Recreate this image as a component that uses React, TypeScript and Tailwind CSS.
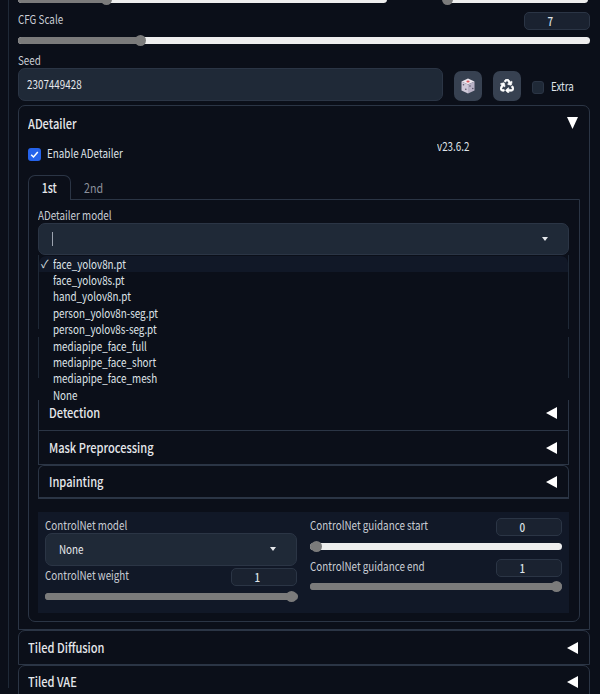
import React from 'react';
import { FaRecycle } from 'react-icons/fa';

const models = [
  'face_yolov8n.pt',
  'face_yolov8s.pt',
  'hand_yolov8n.pt',
  'person_yolov8n-seg.pt',
  'person_yolov8s-seg.pt',
  'mediapipe_face_full',
  'mediapipe_face_short',
  'mediapipe_face_mesh',
  'None',
];

// the text in the picture is narrower than any installed face, so squeeze it a bit
function T({ children, className = '', center = false }: { children: React.ReactNode; className?: string; center?: boolean }) {
  return (
    <span className={`inline-block whitespace-nowrap scale-x-[0.82] ${center ? 'origin-center' : 'origin-left'} ${className}`}>
      {children}
    </span>
  );
}

function Slider({ value, className = '', thumbOnly = false }: { value: number; className?: string; thumbOnly?: boolean }) {
  return (
    <div className={`relative h-[11px] flex items-center ${className}`}>
      <div className={`w-full h-[7px] rounded-full overflow-hidden ${thumbOnly ? 'bg-[#7b7b7b]' : 'bg-[#eeeeee]'}`}>
        <div className="h-full bg-[#7b7b7b]" style={{ width: `${value}%` }} />
      </div>
      <div className="absolute top-0 w-[11px] h-[11px] rounded-full bg-[#7b7b7b]" style={{ left: `calc(${value}% - 5.5px)` }} />
    </div>
  );
}

function NumberBox({ value }: { value: string }) {
  return (
    <div className="w-[66px] h-[18px] rounded-[5px] border border-[#2b3545] bg-[#1a2230] flex items-center justify-center pr-[13px] text-[12px] font-medium text-[#dfe3e8]">
      <T center>{value}</T>
    </div>
  );
}

function Triangle({ down = false, small = false }: { down?: boolean; small?: boolean }) {
  if (small) {
    return (
      <svg width="6" height="4" viewBox="0 0 6 4" className="block">
        <polygon points="0,0 6,0 3,4" fill="#e5e7eb" />
      </svg>
    );
  }
  return (
    <svg width="11" height="12" viewBox="0 0 11 12" className="block">
      <polygon points={down ? '0,0 11,0 5.5,12' : '11,0 11,12 0,6'} fill="#ffffff" />
    </svg>
  );
}

function Dice() {
  return (
    <svg width="14" height="16" viewBox="0 0 14 16" className="block">
      <polygon points="7,0.5 13.5,3.5 7,6.5 0.5,3.5" fill="#ece6ee" />
      <polygon points="0.5,3.5 7,6.5 7,15.5 0.5,12.5" fill="#cfc8d8" />
      <polygon points="13.5,3.5 7,6.5 7,15.5 13.5,12.5" fill="#b9b2c6" />
      <ellipse cx="7" cy="3.5" rx="1.6" ry="0.9" fill="#d9565b" />
      <circle cx="2.5" cy="6.8" r="0.8" fill="#5a5468" />
      <circle cx="4.8" cy="11.2" r="0.8" fill="#5a5468" />
      <circle cx="9" cy="8" r="0.8" fill="#5a5468" />
      <circle cx="11.8" cy="10.5" r="0.8" fill="#5a5468" />
    </svg>
  );
}

function SubAccordion({ title, className = '' }: { title: string; className?: string }) {
  return (
    <div className={`flex items-center justify-between pl-[10px] pr-[11px] border-[#2b3545] ${className}`}>
      <T className="text-[13.5px] font-medium text-[#e5e7eb]">{title}</T>
      <Triangle />
    </div>
  );
}

export default function App() {
  return (
    <div className="w-[600px] h-[694px] overflow-hidden bg-[#0b0f19] text-[#e5e7eb] font-['Noto_Sans_CJK_SC','Noto_Sans',sans-serif]">
      <div className="ml-2 h-full border-l border-[#1f2937] pl-[9px]">
        <div className="w-[572px]">
          <div className="-mt-[6px] flex justify-between">
            <Slider value={24} className="w-[369px]" />
            <Slider value={3} className="w-[145px] mr-[2px]" />
          </div>

          <div className="mt-[7px] flex justify-between items-start">
            <T className="text-[12px] leading-[16px] mt-[-1px] text-[#c9cdd4]">CFG Scale</T>
            <NumberBox value="7" />
          </div>
          <Slider value={21.5} className="mt-[5px]" />

          <div className="mt-[6px] h-[16px] text-[12px] leading-[16px] text-[#c9cdd4]">
            <T>Seed</T>
          </div>
          <div className="flex h-[33px]">
            <div className="w-[425px] pb-[2px] rounded-[7px] border border-[#2b3545] bg-[#1f2937] flex items-center pl-[8px] text-[12px] text-[#e5e7eb]">
              <T>2307449428</T>
            </div>
            <button className="ml-[11px] mt-[3px] w-[28px] h-[30px] rounded-[7px] bg-[#374151] flex items-center justify-center">
              <Dice />
            </button>
            <button className="ml-[11px] mt-[3px] w-[28px] h-[30px] rounded-[7px] bg-[#374151] flex items-center justify-center text-white">
              <FaRecycle size={14} stroke="currentColor" strokeWidth={24} />
            </button>
            <div className="ml-[11px] mt-[13px] w-[12px] h-[13px] rounded-[3px] border border-[#2b3545] bg-[#1f2937]" />
            <T className="ml-[7px] mt-[10px] text-[12px] leading-[16px] text-[#dfe3e8]">Extra</T>
          </div>

          {/* ADetailer */}
          <div className="mt-[4px] h-[525px] rounded-t-[7px] border border-[#2b3545] pl-[9px]">
            <div className="h-[34px] flex items-center justify-between pr-[11px]">
              <T className="text-[13.5px] font-medium">ADetailer</T>
              <Triangle down />
            </div>
            <div className="mt-[8px] h-[13px] flex items-center">
              <div className="w-[13px] h-[13px] rounded-[3px] bg-[#2563eb] flex items-center justify-center">
                <svg width="9" height="9" viewBox="0 0 9 9" className="block">
                  <path d="M1.2 4.8 L3.5 7 L7.8 2" fill="none" stroke="#ffffff" strokeWidth="1.5" />
                </svg>
              </div>
              <div className="ml-[6px] w-[390px] mb-[4px] text-[12px] text-[#dfe3e8]">
                <T>Enable ADetailer</T>
              </div>
              <T className="mb-[18px] text-[12px] text-[#dfe3e8]">v23.6.2</T>
            </div>

            <div className="mt-[14px] flex h-[25px] relative z-10">
              <div className="w-[43px] h-[25px] rounded-t-[7px] border border-b-0 border-[#2b3545] bg-[#0b0f19] flex items-center justify-center text-[13px] font-medium">
                <T center>1st</T>
              </div>
              <div className="ml-[13px] w-[20px] flex items-center justify-center text-[13px] text-[#8b919b]">
                <T center>2nd</T>
              </div>
            </div>

            <div className="-mt-px w-[552px] h-[423px] rounded-b-[7px] border border-[#2b3545] pl-[9px] pr-[10px] pt-[7px]">
              <div className="h-[16px] text-[12px] leading-[16px] text-[#c9cdd4]">
                <T>ADetailer model</T>
              </div>
              <div className="relative">
                <div className="h-[32px] rounded-[7px] border border-[#2b3545] bg-[#1f2937] flex items-center justify-between pl-[13px] pr-[20px]">
                  <div className="w-px h-[14px] bg-[#9ca3af]" />
                  <Triangle small />
                </div>

                <div className="h-[74px] border-x border-[#1f2937]" />
                <div className="mt-[8px] h-[41px] border-x border-[#1f2937]" />
                <SubAccordion title="Detection" className="mt-[22px] h-[31px] pb-[5px] border-x border-b" />
                <SubAccordion title="Mask Preprocessing" className="h-[34px] border-x border-b" />
                <SubAccordion title="Inpainting" className="h-[34px] rounded-t-[6px] border border-b-2" />

                <div className="absolute top-[33px] left-px right-px h-[148px] rounded-t-[7px] bg-[#0b0f19] text-[12px] text-[#dfe3e8]">
                  {models.map((m, i) => (
                    <div key={m} className={`relative h-[16.4px] pb-px flex items-center pl-[14px] ${i === 0 ? 'rounded-t-[7px] bg-[#111827]' : ''}`}>
                      {i === 0 && <span className="absolute left-[2px] text-[11px]">✓</span>}
                      <T>{m}</T>
                    </div>
                  ))}
                </div>
              </div>

              <div className="mt-[13px] h-[101px] bg-[#111827] px-[7px] grid grid-cols-[252px_252px] gap-x-[13px] text-[12px] text-[#c9cdd4]">
                <div className="pt-[5px]">
                  <div className="h-[16px] leading-[16px]">
                    <T>ControlNet model</T>
                  </div>
                  <div className="h-[33px] pb-[2px] rounded-[7px] border border-[#2b3545] bg-[#1f2937] flex items-center justify-between pl-[13px] pr-[20px] text-[#e5e7eb]">
                    <T>None</T>
                    <Triangle small />
                  </div>
                  <div className="mt-[2px] flex justify-between items-start">
                    <T className="leading-[16px] -mt-px">ControlNet weight</T>
                    <NumberBox value="1" />
                  </div>
                  <Slider value={97.6} thumbOnly className="mt-[5px] w-[253px]" />
                </div>
                <div className="pt-[6px]">
                  <div className="flex justify-between items-start">
                    <T className="leading-[16px] -mt-px">ControlNet guidance start</T>
                    <NumberBox value="0" />
                  </div>
                  <Slider value={2.5} className="mt-[5px]" />
                  <div className="mt-[7px] flex justify-between items-start">
                    <T className="leading-[16px] -mt-px">ControlNet guidance end</T>
                    <NumberBox value="1" />
                  </div>
                  <Slider value={98} thumbOnly className="mt-[4px]" />
                </div>
              </div>
            </div>
          </div>

          <div className="h-[35px] rounded-t-[7px] border border-[#2b3545] pl-[9px] pr-[11px] flex items-center justify-between">
            <T className="text-[13.5px] font-medium">Tiled Diffusion</T>
            <Triangle />
          </div>
          <div className="h-[35px] pb-[2px] rounded-t-[7px] border border-[#2b3545] pl-[9px] pr-[11px] flex items-center justify-between">
            <T className="text-[13.5px] font-medium">Tiled VAE</T>
            <Triangle />
          </div>
        </div>
      </div>
    </div>
  );
}
